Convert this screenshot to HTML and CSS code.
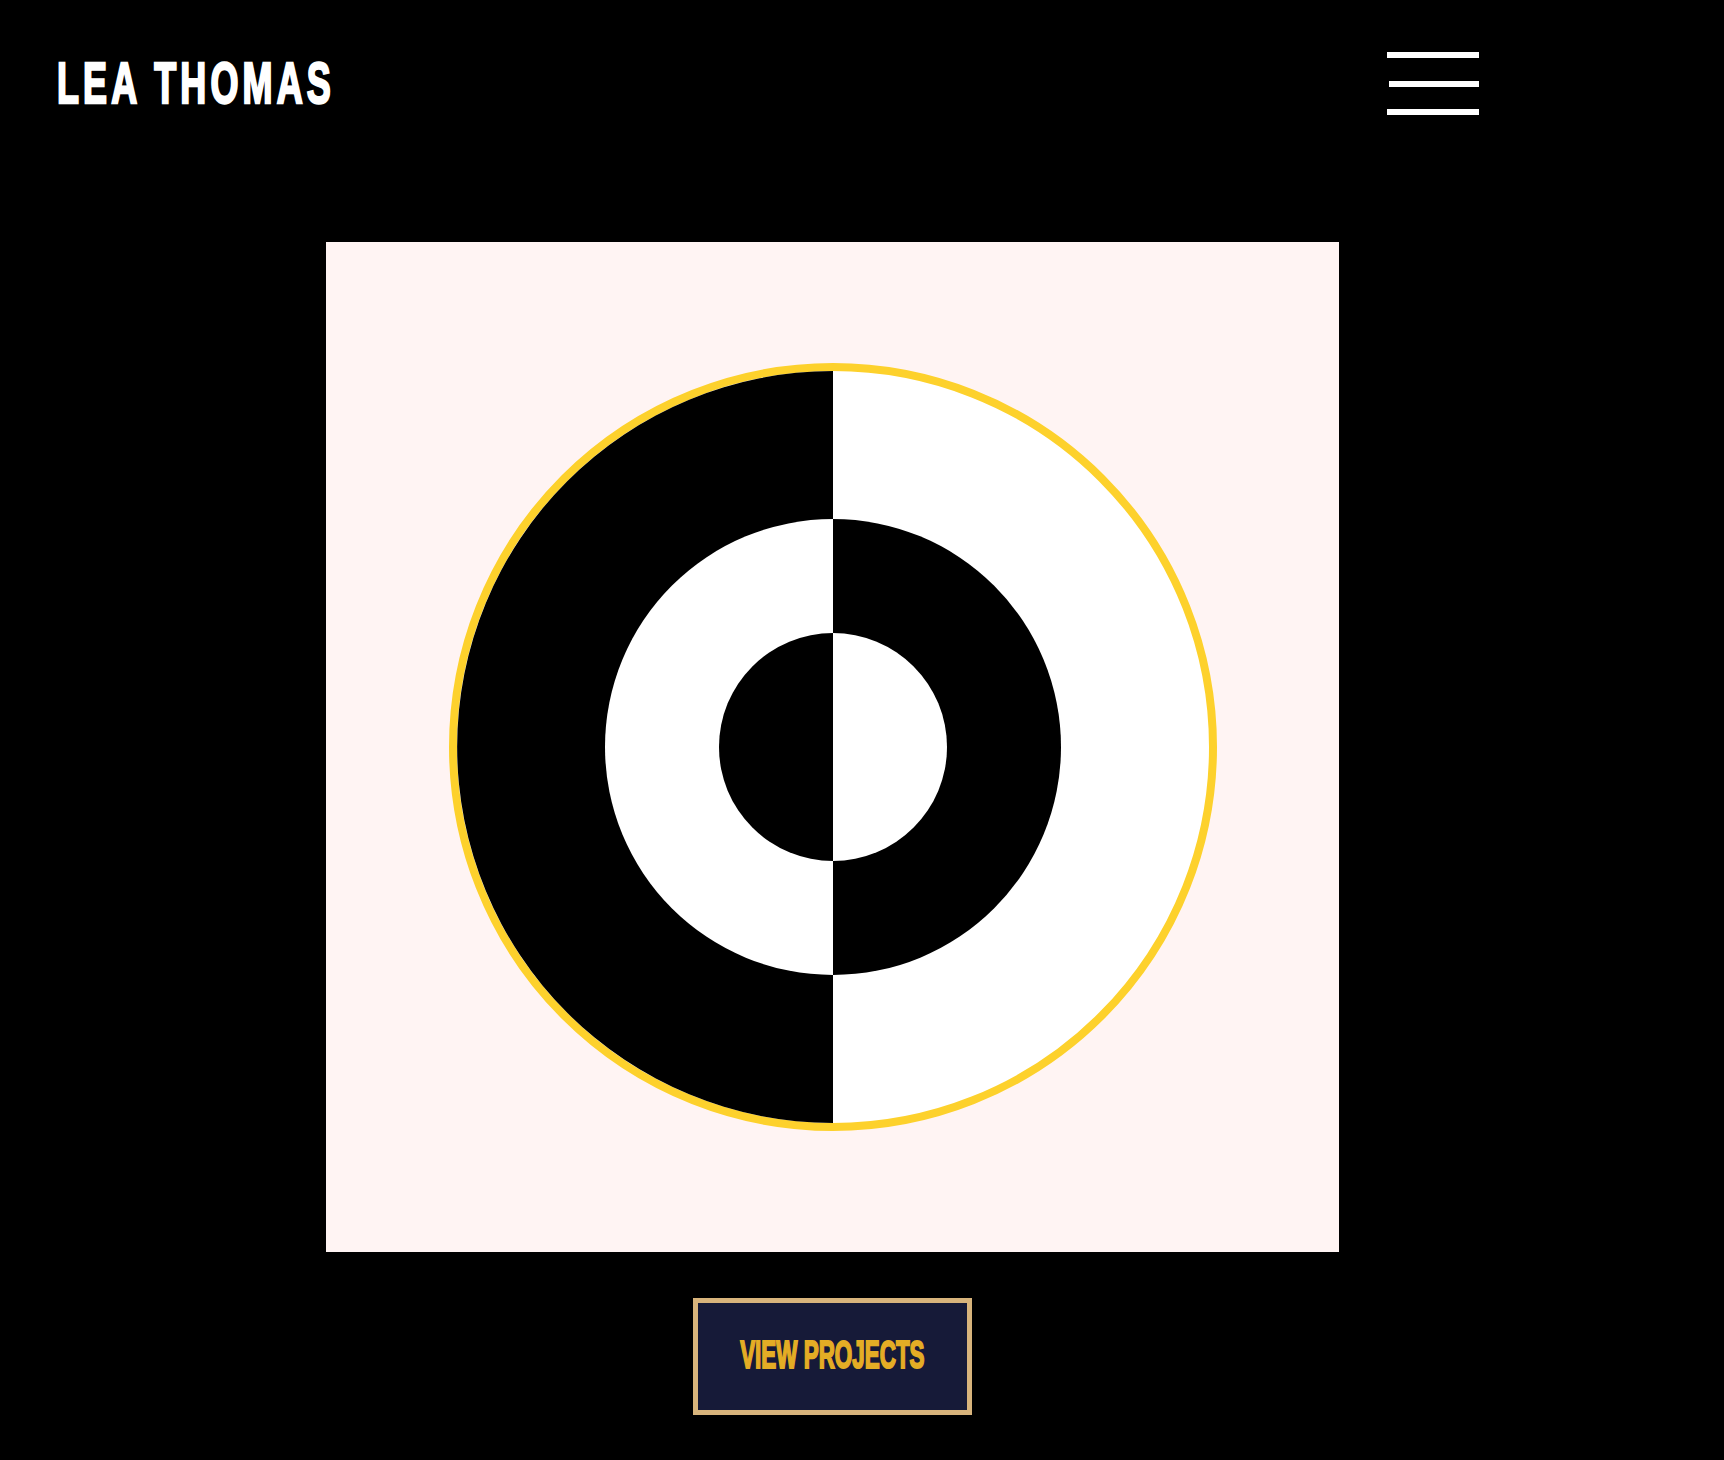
FILE: index.html
```html
<!DOCTYPE html>
<html lang="en">
<head>
<meta charset="utf-8">
<title>Lea Thomas</title>
<link rel="stylesheet" href="styles.css">
</head>
<body>
<header class="site-header">
  <div class="brand"><span class="brand-text">LEA THOMAS</span></div>
  <button class="menu" aria-label="Menu">
    <span class="bar"></span>
    <span class="bar bar-mid"></span>
    <span class="bar"></span>
  </button>
</header>
<main class="hero">
  <div class="artwork">
    <svg class="target" width="768" height="768" viewBox="0 0 768 768">
      <circle cx="384" cy="384" r="380" fill="#ffffff" stroke="#fdd12c" stroke-width="8"/>
      <path d="M384 8 A376 376 0 0 0 384 760 Z" fill="#000"/>
      <path d="M384 156 A228 228 0 0 0 384 612 Z" fill="#fff"/>
      <path d="M384 156 A228 228 0 0 1 384 612 Z" fill="#000"/>
      <path d="M384 270 A114 114 0 0 0 384 498 Z" fill="#000"/>
      <path d="M384 270 A114 114 0 0 1 384 498 Z" fill="#fff"/>
    </svg>
  </div>
  <a class="cta" href="#"><span class="cta-text">VIEW PROJECTS</span></a>
</main>
</body>
</html>
```
FILE: styles.css
```css
html, body {
  margin: 0;
  padding: 0;
  background: #000;
}
body {
  min-height: 1460px;
  font-family: "Liberation Sans", Arial, sans-serif;
}
.site-header {
  display: flex;
  justify-content: space-between;
  align-items: flex-start;
  height: 242px;
  padding: 0 245px 0 57px;
  box-sizing: border-box;
}
.brand {
  padding-top: 54px;
}
.brand-text {
  display: inline-block;
  color: #fff;
  font-weight: 700;
  font-size: 58px;
  line-height: 58px;
  letter-spacing: 6.7px;
  -webkit-text-stroke: 2.5px #fff;
  transform: scaleX(0.62);
  transform-origin: left center;
  white-space: nowrap;
}
.menu {
  display: flex;
  flex-direction: column;
  align-items: flex-end;
  gap: 22.5px;
  margin-top: 52px;
  padding: 0;
  background: none;
  border: 0;
  width: 92px;
}
.bar {
  display: block;
  width: 92px;
  height: 6px;
  background: #fff;
}
.bar-mid {
  width: 90px;
}
.hero {
  display: flex;
  flex-direction: column;
  align-items: center;
  width: 1013px;
  margin-left: 326px;
}
.artwork {
  width: 1013px;
  height: 1010px;
  background: #fff4f3;
  display: flex;
  align-items: center;
  justify-content: center;
}
.target {
  display: block;
}
.cta {
  margin-top: 46px;
  width: 279px;
  height: 117px;
  box-sizing: border-box;
  border: 5px solid #d8b47c;
  background: #161a38;
  display: flex;
  align-items: center;
  justify-content: center;
  text-decoration: none;
}
.cta-text {
  display: inline-block;
  flex-shrink: 0;
  color: #e4ad25;
  font-weight: 700;
  font-size: 39px;
  line-height: 39px;
  white-space: nowrap;
  -webkit-text-stroke: 2px #e4ad25;
  transform: scaleX(0.575) translateY(-2px);
  transform-origin: center center;
}
```
